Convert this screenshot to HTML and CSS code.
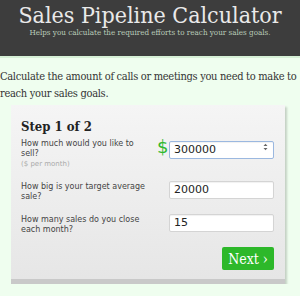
FILE: index.html
```html
<!DOCTYPE html>
<html lang="en">
<head>
    <meta charset="UTF-8">
    <title>Sales Pipeline Calculator</title>
    <link rel="stylesheet" href="styles.css">
</head>
<body>

    <!-- Header -->
    <header class="top">
        <h1>Sales Pipeline Calculator</h1>
        <p class="tagline">Helps you calculate the required efforts to reach your sales goals.</p>
    </header>

    <p class="intro">Calculate the amount of calls or meetings you need to make to reach your sales goals.</p>

    <!-- Step card -->
    <div class="card">
        <h2>Step 1 of 2</h2>

        <div class="row">
            <label class="question">How much would you like to sell?<small>($ per month)</small></label>
            <span class="currency">$</span>
            <span class="field-wrap">
                <input class="field focused" type="text" value="300000">
                <svg class="spinner" width="5" height="8" viewBox="0 0 5 8">
                    <path d="M0.5 3 L2.5 0.8 L4.5 3 Z M0.5 5 L2.5 7.2 L4.5 5 Z" fill="#666"/>
                </svg>
            </span>
        </div>

        <div class="row">
            <label class="question">How big is your target average sale?</label>
            <span class="currency"></span>
            <span class="field-wrap">
                <input class="field" type="text" value="20000">
            </span>
        </div>

        <div class="row">
            <label class="question">How many sales do you close each month?</label>
            <span class="currency"></span>
            <span class="field-wrap">
                <input class="field" type="text" value="15">
            </span>
        </div>

        <div class="actions">
            <button class="next">Next &rsaquo;</button>
        </div>
    </div>

</body>
</html>
```

FILE: styles.css
```css
/* Page */
body {
    margin: 0;
    background: #effeef;
    font-family: 'DejaVu Sans', sans-serif;
    color: #333;
}

/* Dark header */
.top {
    background: #3d3d3d;
    height: 56px;
    border-bottom: 2px solid #d6f0d6;
    text-align: center;
    overflow: hidden;
}

.top h1 {
    margin: 0;
    padding-top: 2px;
    font-family: 'DejaVu Serif Condensed', 'DejaVu Serif', serif;
    font-stretch: condensed;
    font-weight: normal;
    font-size: 23px;
    line-height: 26px;
    color: #e9e9e9;
    white-space: nowrap;
}

.tagline {
    margin: 0;
    font-family: 'DejaVu Serif Condensed', 'DejaVu Serif', serif;
    font-stretch: condensed;
    font-size: 8px;
    line-height: 10px;
    color: #b9ccb9;
    white-space: nowrap;
}

.intro {
    margin: 10px 0 0;
    font-family: 'DejaVu Serif Condensed', 'DejaVu Serif', serif;
    font-stretch: condensed;
    font-size: 11px;
    letter-spacing: -0.3px;
    line-height: 17px;
    color: #333;
}

/* Card */
.card {
    margin: 3px 15px 0 11px;
    padding: 13px 11px 9px 10px;
    background: linear-gradient(to bottom, #f5f5f5, #e6e6e6);
    border-bottom: 5px solid #c9c9c9;
    box-shadow: 2px 2px 2px rgba(0, 0, 0, 0.18);
}

.card h2 {
    margin: 0 0 3px;
    font-family: 'DejaVu Serif Condensed', 'DejaVu Serif', serif;
    font-stretch: condensed;
    font-size: 13px;
    line-height: 17px;
    color: #222;
}

.row {
    display: grid;
    grid-template-columns: 1fr 12px 105px;
    align-items: start;
    margin-bottom: 9px;
}

.question {
    font-size: 8px;
    line-height: 10px;
    color: #444;
    padding-top: 1px;
    padding-right: 8px;
}

.row + .row .question {
    padding-top: 4px;
}

.question small {
    display: block;
    font-size: 7px;
    color: #aaa;
}

.currency {
    color: #2eb82e;
    font-size: 18px;
    line-height: 18px;
}

.field-wrap {
    position: relative;
    display: block;
}

.field {
    box-sizing: border-box;
    width: 105px;
    height: 18px;
    padding: 0 4px;
    border: 1px solid #d4d4d4;
    border-radius: 2px;
    background: #fff;
    font-family: 'DejaVu Sans', sans-serif;
    font-size: 11px;
    color: #222;
    box-shadow: inset 0 1px 1px rgba(0, 0, 0, 0.06);
}

.field.focused {
    border-color: #9bb8e0;
}

.spinner {
    position: absolute;
    right: 6px;
    top: 5px;
}

/* Next button */
.actions {
    display: flex;
    justify-content: flex-end;
    padding-top: 3px;
}

.next {
    width: 52px;
    height: 23px;
    border: none;
    border-radius: 2px;
    background: #2db82a;
    color: #fff;
    font-family: 'DejaVu Serif Condensed', 'DejaVu Serif', serif;
    font-stretch: condensed;
    font-size: 14px;
    padding: 0;
}
```
